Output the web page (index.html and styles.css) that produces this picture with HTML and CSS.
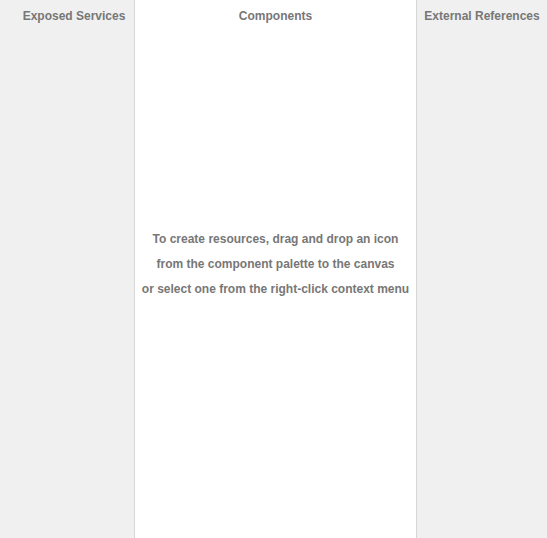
FILE: index.html
```html
<!DOCTYPE html>
<html>
<head>
<meta charset="utf-8">
<link rel="stylesheet" href="styles.css">
</head>
<body>
<div class="layout">
  <div class="panel side left">
    <div class="title">Exposed Services</div>
  </div>
  <div class="panel center">
    <div class="title">Components</div>
    <div class="hint">
      <div>To create resources, drag and drop an icon</div>
      <div>from the component palette to the canvas</div>
      <div>or select one from the right-click context menu</div>
    </div>
  </div>
  <div class="panel side right">
    <div class="title">External References</div>
  </div>
</div>
</body>
</html>
```

FILE: styles.css
```css
html, body {
  margin: 0;
  padding: 0;
  height: 100%;
}
body {
  font-family: "Liberation Sans", Arial, sans-serif;
  font-size: 12px;
  font-weight: bold;
  color: #777777;
  background: #f0f0f0;
}
.layout {
  display: grid;
  grid-template-columns: 134px 283px 130px;
  height: 538px;
}
.panel {
  display: flex;
  flex-direction: column;
  box-sizing: border-box;
}
.side {
  background: #f0f0f0;
}
.left {
  padding-left: 14px;
}
.center {
  background: #ffffff;
  border-left: 1px solid #d6d6d6;
  border-right: 1px solid #d6d6d6;
}
.title {
  text-align: center;
  line-height: 16px;
  padding-top: 8px;
}
.hint {
  flex: 1;
  display: flex;
  flex-direction: column;
  justify-content: center;
  text-align: center;
  line-height: 25px;
  padding-bottom: 34px;
}
```
